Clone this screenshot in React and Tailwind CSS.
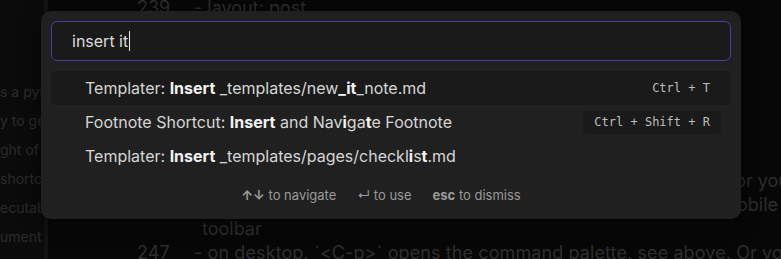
import React from 'react';

const sideLines = ['s a python', 'y to get', 'ght of', 'shortcut', 'ecutable', 'ument'];

const results = [
    {
        parts: [['Templater: ', false], ['Insert', true], [' _templates/new', false], ['_it', true], ['_note.md', false]],
        hotkey: 'Ctrl + T',
        selected: true,
    },
    {
        parts: [['Footnote Shortcut: ', false], ['Insert', true], [' and Nav', false], ['i', true], ['ga', false], ['t', true], ['e Footnote', false]],
        hotkey: 'Ctrl + Shift + R',
    },
    {
        parts: [['Templater: ', false], ['Insert', true], [' _templates/pages/checkl', false], ['i', true], ['s', false], ['t', true], ['.md', false]],
    },
];

const Row = ({ item }) => (
    <div
        className={`flex h-[34px] items-center justify-between rounded-[4px] pl-[34px] pr-[10px] ${
            item.selected ? 'bg-[#1a1a1a]' : ''
        }`}
    >
        <span className="whitespace-nowrap text-[16px] text-[#d6d6d6]">
            {item.parts.map(([t, b], i) =>
                b ? (
                    <span key={i} className="font-bold text-[#f2f2f2]">
                        {t}
                    </span>
                ) : (
                    <span key={i}>{t}</span>
                )
            )}
        </span>
        {item.hotkey && (
            <kbd className="flex h-[23px] items-center rounded-[4px] bg-[#1a1a1a] px-[11px] font-['DejaVu_Sans_Mono',monospace] text-[12px] text-[#bdbdbd]">
                {item.hotkey.split('').map((c, i) => (c === ' ' ? <span key={i}>&nbsp;</span> : c))}
            </kbd>
        )}
    </div>
);

export default function App() {
    return (
        <div className="relative h-[259px] w-[781px] overflow-hidden bg-[#070707] font-['Inter',sans-serif]">
            {/* background: sidebar + editor */}
            <div className="flex h-full">
                <div className="flex h-full w-[44px] flex-col overflow-hidden bg-[#0b0b0b] pt-[82px]">
                    {sideLines.map((l) => (
                        <div key={l} className="h-[29px] whitespace-nowrap text-[14px] leading-[20px] text-[#2b2b2b]">
                            {l}
                        </div>
                    ))}
                </div>
                <div className="w-[4px] bg-[#121212]"></div>
                <div className="flex flex-1 flex-col overflow-hidden text-[18px] leading-[24px] text-[#2e2e2e]">
                    <div className="mt-[-4px] flex whitespace-nowrap">
                        <span className="w-[146px] shrink-0 pl-[89px]">239</span>
                        <span>- layout: post</span>
                    </div>
                    <div className="mt-[149px] mr-[-8px] whitespace-nowrap text-right">
                        pull down on the note to open the command palette, or you
                    </div>
                    <div className="mr-[3px] whitespace-nowrap text-right">
                        or add the button to the toolbar on mobile
                    </div>
                    <div className="whitespace-nowrap pl-[154px]">toolbar</div>
                    <div className="flex whitespace-nowrap tracking-[0.1px]">
                        <span className="w-[146px] shrink-0 pl-[89px]">247</span>
                        <span>- on desktop, `&lt;C-p&gt;` opens the command palette, see above. Or you</span>
                    </div>
                </div>
            </div>

            {/* command palette */}
            <div className="absolute left-[41px] top-[11px] flex h-[208px] w-[700px] flex-col rounded-[10px] bg-[#202020] p-[10px] shadow-[0_4px_20px_rgba(0,0,0,0.5)]">
                <div className="flex h-[40px] items-center rounded-[6px] border border-[#4a3b9c] bg-[#1a1a1a] px-[20px] text-[16px] text-[#dcdcdc]">
                    <span className="whitespace-pre">insert it</span>
                    <span className="ml-[1px] h-[20px] w-[1px] bg-[#e6e6e6]"></span>
                </div>
                <div className="mt-[10px] flex flex-col">
                    {results.map((r, i) => (
                        <Row key={i} item={r} />
                    ))}
                </div>
                <div className="flex flex-1 items-center justify-center gap-[21px] pr-[20px] pt-[8px] text-[13px] leading-[16px] text-[#9a9a9a]">
                    <span className="whitespace-nowrap">
                        <span className="font-bold">↑↓</span> to navigate
                    </span>
                    <span className="whitespace-nowrap">↵ to use</span>
                    <span className="whitespace-nowrap">
                        <span className="font-bold">esc</span> to dismiss
                    </span>
                </div>
            </div>
        </div>
    );
}
